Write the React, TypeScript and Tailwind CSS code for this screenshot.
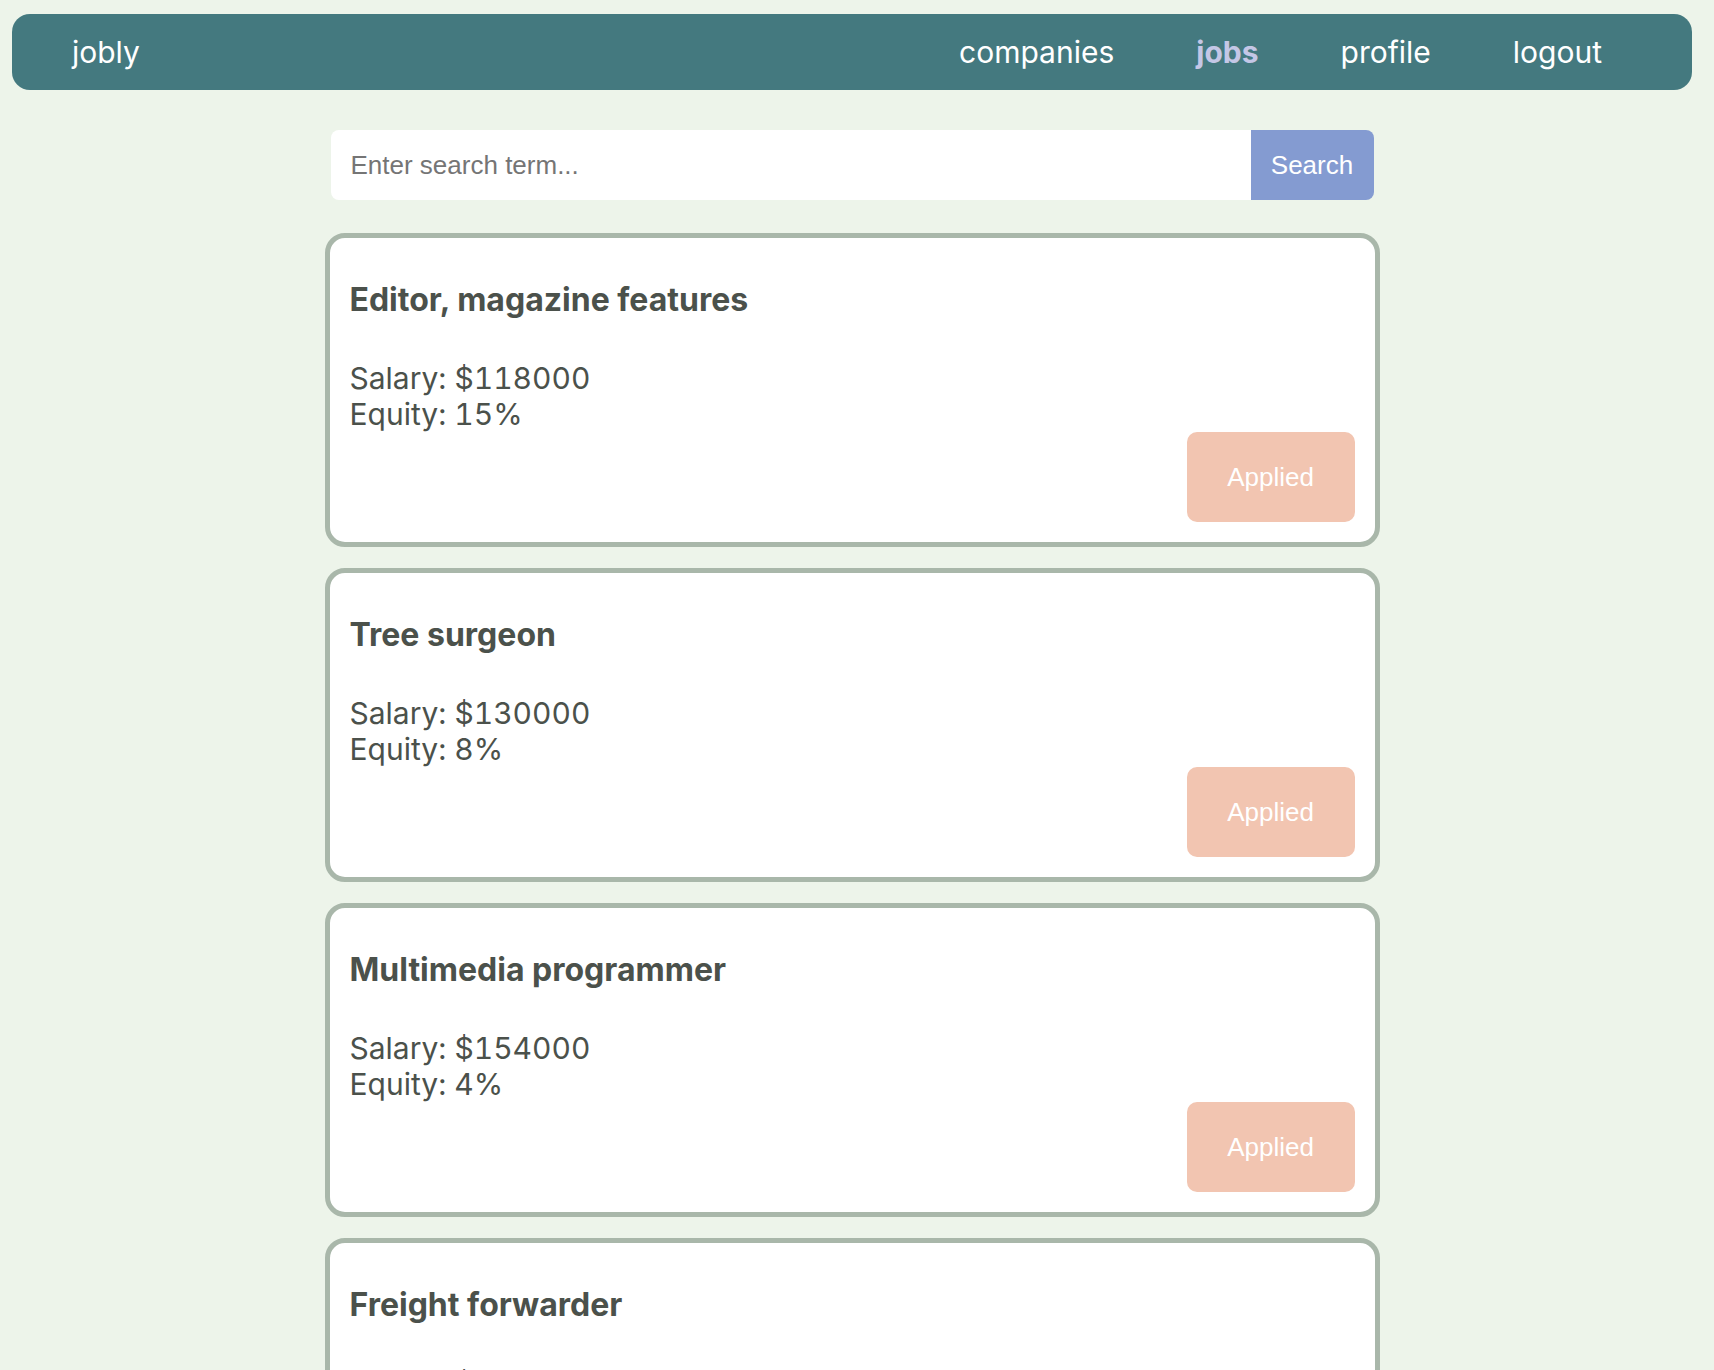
import React from "react";

const jobs = [
  { title: "Editor, magazine features", salary: "$118000", equity: "15%" },
  { title: "Tree surgeon", salary: "$130000", equity: "8%" },
  { title: "Multimedia programmer", salary: "$154000", equity: "4%" },
  { title: "Freight forwarder", salary: "$99000", equity: "6%" },
];

function JobCard({ title, salary, equity }: { title: string; salary: string; equity: string }) {
  return (
    <div className="rounded-[20px] border-[5px] border-[#a9b7aa] bg-white px-5 pb-5 pt-[42px]">
      <h3 className="text-[32px] font-bold leading-[39px] text-[#4b514b]">{title}</h3>
      <div className="mt-[41px] text-[30px] leading-[36px] text-[#4b514b] tabular-nums">
        <div>Salary: {salary}</div>
        <div>Equity: {equity}</div>
      </div>
      <div className="flex justify-end">
        <button className="h-[90px] w-[168px] rounded-[10px] bg-[#f2c5b1] text-[26px] text-white font-['Liberation_Sans',Arial,sans-serif]">
          Applied
        </button>
      </div>
    </div>
  );
}

export default function App() {
  return (
    <div className="min-h-screen bg-[#edf4ea] pt-[14px] pb-10 font-['Inter',sans-serif]">
      <nav className="ml-3 mr-[22px] flex h-[76px] items-center rounded-[18px] bg-[#44797f] pl-[60px] pr-[90px] text-[30px] text-white">
        <a className="leading-none">jobly</a>
        <div className="ml-auto flex items-center gap-[82px]">
          <a>companies</a>
          <a className="font-bold text-[#c4c7e6]">jobs</a>
          <a>profile</a>
          <a>logout</a>
        </div>
      </nav>
      <div className="pr-[10px]">
        <div className="mx-auto w-[1055px]">
          <div className="mx-[6px] mt-10 flex h-[70px]">
            <input
              placeholder="Enter search term..."
              className="h-full flex-1 rounded-l-lg bg-white pl-5 text-[26px] font-['Liberation_Sans',Arial,sans-serif] text-[#333] placeholder:text-[#757575] outline-none"
            />
            <button className="h-full w-[123px] rounded-r-lg bg-[#849bd1] text-[26px] text-white font-['Liberation_Sans',Arial,sans-serif]">
              Search
            </button>
          </div>
          <div className="mt-[33px] flex flex-col gap-[21px]">
            {jobs.map((j) => (
              <JobCard key={j.title} {...j} />
            ))}
          </div>
        </div>
      </div>
    </div>
  );
}
